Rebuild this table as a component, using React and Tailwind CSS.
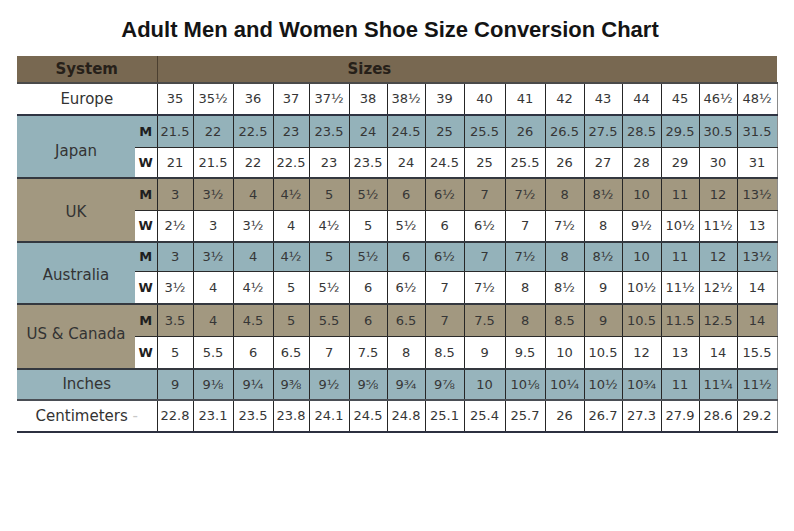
import React from 'react'

const COLS = [36, 40, 40, 36, 40, 38, 38, 39, 41, 40, 39, 38, 39, 38, 38, 40]

const EUROPE = ['35', '35½', '36', '37', '37½', '38', '38½', '39', '40', '41', '42', '43', '44', '45', '46½', '48½']
const INCHES = ['9', '9⅛', '9¼', '9⅜', '9½', '9⅝', '9¾', '9⅞', '10', '10⅛', '10¼', '10½', '10¾', '11', '11¼', '11½']
const CM = ['22.8', '23.1', '23.5', '23.8', '24.1', '24.5', '24.8', '25.1', '25.4', '25.7', '26', '26.7', '27.3', '27.9', '28.6', '29.2']

const GROUPS = [
  {
    label: 'Japan',
    bg: 'bg-[#94b2ba]',
    hm: 'h-[32px]',
    hw: 'h-[31px]',
    pad: 'pt-[10px]',
    m: ['21.5', '22', '22.5', '23', '23.5', '24', '24.5', '25', '25.5', '26', '26.5', '27.5', '28.5', '29.5', '30.5', '31.5'],
    w: ['21', '21.5', '22', '22.5', '23', '23.5', '24', '24.5', '25', '25.5', '26', '27', '28', '29', '30', '31'],
  },
  {
    label: 'UK',
    bg: 'bg-[#a29880]',
    hm: 'h-[32px]',
    hw: 'h-[32px]',
    pad: 'pt-1',
    m: ['3', '3½', '4', '4½', '5', '5½', '6', '6½', '7', '7½', '8', '8½', '10', '11', '12', '13½'],
    w: ['2½', '3', '3½', '4', '4½', '5', '5½', '6', '6½', '7', '7½', '8', '9½', '10½', '11½', '13'],
  },
  {
    label: 'Australia',
    bg: 'bg-[#94b2ba]',
    hm: 'h-[29px]',
    hw: 'h-[33px]',
    pad: 'pt-1',
    m: ['3', '3½', '4', '4½', '5', '5½', '6', '6½', '7', '7½', '8', '8½', '10', '11', '12', '13½'],
    w: ['3½', '4', '4½', '5', '5½', '6', '6½', '7', '7½', '8', '8½', '9', '10½', '11½', '12½', '14'],
  },
  {
    label: 'US & Canada',
    bg: 'bg-[#a29880]',
    hm: 'h-[32px]',
    hw: 'h-[33px]',
    pad: 'pb-1',
    m: ['3.5', '4', '4.5', '5', '5.5', '6', '6.5', '7', '7.5', '8', '8.5', '9', '10.5', '11.5', '12.5', '14'],
    w: ['5', '5.5', '6', '6.5', '7', '7.5', '8', '8.5', '9', '9.5', '10', '10.5', '12', '13', '14', '15.5'],
  },
]

function Cells({ values, bottom }) {
  return values.map((v, i) => (
    <td
      key={i}
      className={`border-l border-l-[#262626] text-center align-middle text-[13px] text-[#363636] ${bottom} ${
        i === values.length - 1 ? 'border-r border-r-[#8a8a8a]' : ''
      }`}
    >
      {v}
    </td>
  ))
}

export default function App() {
  return (
    <div className="w-[794px] h-[531px] bg-white overflow-hidden">
      {/* Title */}
      <div className="h-[56px] pt-[17px] pr-[14px] text-center font-['Liberation_Sans',Arial,sans-serif] text-[22px] font-bold leading-[26px] text-[#141414]">
        Adult Men and Women Shoe Size Conversion Chart
      </div>

      {/* Chart */}
      <table className="ml-[17px] w-[760px] table-fixed border-collapse font-['DejaVu_Sans',sans-serif]">
        <colgroup>
          <col className="w-[118px]" />
          <col className="w-[22px]" />
          {COLS.map((w, i) => (
            <col key={i} style={{ width: w }} />
          ))}
        </colgroup>
        <tbody>
          <tr className="h-[27px] bg-[#786851]">
            <td colSpan={2} className="border-b-2 border-b-[#4a4a4a] text-center text-[15px] font-bold text-[#262019]">
              System
            </td>
            <td colSpan={16} className="border-b-2 border-b-[#4a4a4a] border-l border-l-[#4b3f30] pl-[190px] text-left text-[15px] font-bold text-[#262019]">
              Sizes
            </td>
          </tr>

          <tr className="h-[32px] bg-white">
            <td colSpan={2} className="border-b-2 border-b-[#2f3442] text-center text-[15px] text-[#333]">
              Europe
            </td>
            <Cells values={EUROPE} bottom="border-b-2 border-b-[#2f3442]" />
          </tr>

          {GROUPS.map((g) => (
            <React.Fragment key={g.label}>
              <tr className={`${g.hm} ${g.bg}`}>
                <td rowSpan={2} className={`border-b-2 border-b-[#34383f] ${g.pad} text-center text-[15px] text-[#333]`}>
                  {g.label}
                </td>
                <td className="border-b border-b-[#2a2a2a] text-center text-[13px] font-bold text-[#1f1f1f]">M</td>
                <Cells values={g.m} bottom="border-b border-b-[#2a2a2a]" />
              </tr>
              <tr className={`${g.hw} bg-white`}>
                <td className="border-b-2 border-b-[#34383f] text-center text-[13px] font-bold text-[#1f1f1f]">W</td>
                <Cells values={g.w} bottom="border-b-2 border-b-[#34383f]" />
              </tr>
            </React.Fragment>
          ))}

          <tr className="h-[31px] bg-[#97b4bc]">
            <td colSpan={2} className="border-b-2 border-b-[#4a4e55] text-center text-[15px] text-[#333]">
              Inches
            </td>
            <Cells values={INCHES} bottom="border-b-2 border-b-[#4a4e55]" />
          </tr>

          <tr className="h-[32px] bg-white">
            <td colSpan={2} className="border-b-2 border-b-[#2c3040] text-center text-[15px] text-[#333]">
              Centimeters <span className="text-[#c8c8c8]">-</span>
            </td>
            <Cells values={CM} bottom="border-b-2 border-b-[#2c3040]" />
          </tr>
        </tbody>
      </table>
    </div>
  )
}
